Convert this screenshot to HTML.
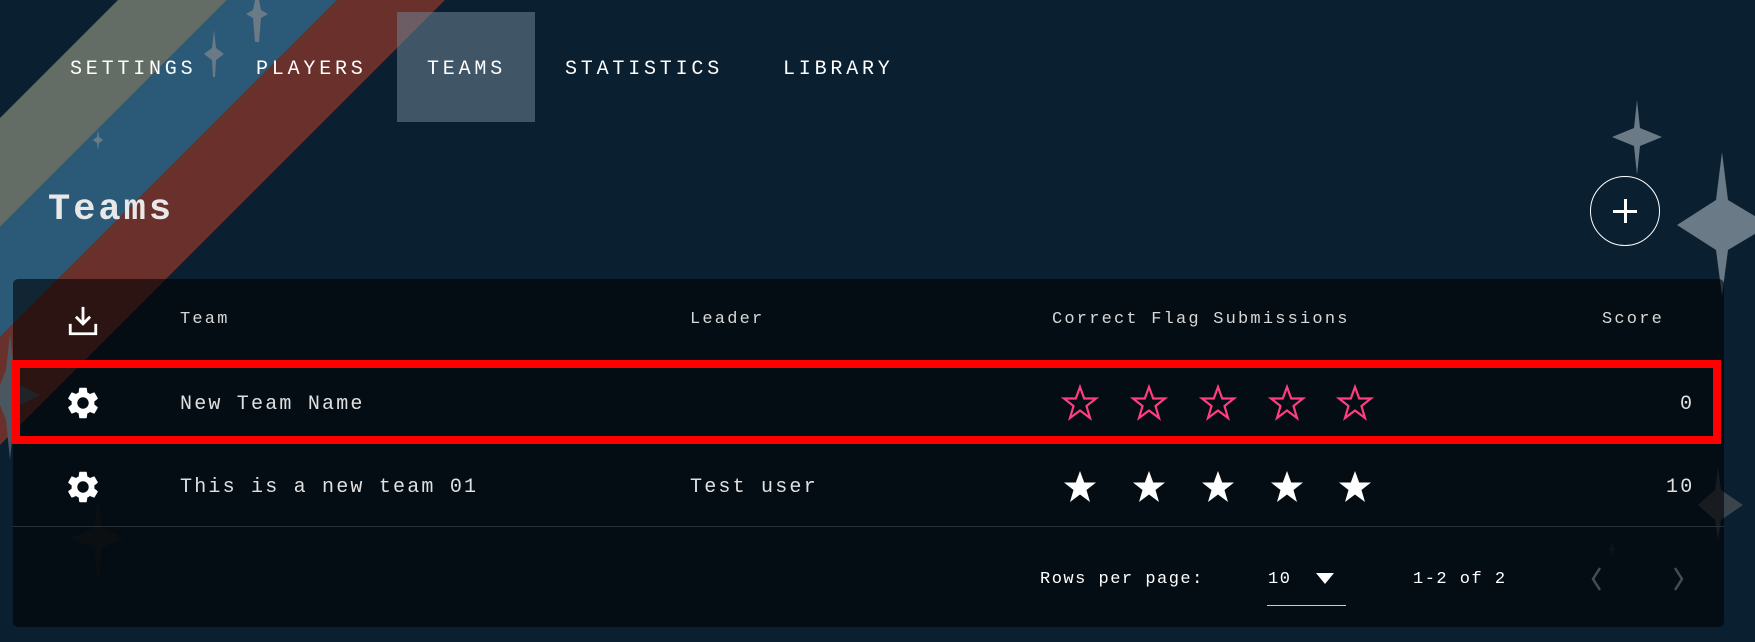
<!DOCTYPE html>
<html><head><meta charset="utf-8"><style>
*{margin:0;padding:0;box-sizing:border-box}
body{width:1755px;height:642px;background:#0a1f2f;overflow:hidden;position:relative;font-family:"Liberation Mono",monospace;color:#e6e6e6}
.band{position:absolute;left:0;top:0;width:1755px;height:642px}
.nav{position:absolute;top:15px;height:110px;font-size:20px;letter-spacing:3.8px;color:#fff;line-height:110px}
.nav span{position:absolute;white-space:nowrap}
.active{position:absolute;left:397px;top:12px;width:138px;height:110px;background:rgba(110,130,145,.55)}
h1{position:absolute;left:48px;top:189px;font-size:37px;letter-spacing:3px;font-weight:bold;color:#e8e8e8}
.plus{position:absolute;left:1590px;top:176px;width:70px;height:70px;border:1.5px solid #fff;border-radius:50%}
.plus:before{content:"";position:absolute;left:22px;top:33px;width:24px;height:3px;background:#fff}
.plus:after{content:"";position:absolute;left:33px;top:22px;width:3px;height:24px;background:#fff}
.card{position:absolute;left:13px;top:279px;width:1711px;height:348px;background:rgba(0,0,0,.58);border-radius:5px}
.t{position:absolute;white-space:nowrap}
.hd{font-size:17px;letter-spacing:2.2px;color:#d8d8d8;top:310px}
.rw{font-size:20px;letter-spacing:2.2px;color:#e0e0e0}
.red{position:absolute;left:12px;top:360px;width:1709px;height:84px;border:8px solid #ff0000}
.line{position:absolute;left:13px;top:526px;width:1711px;height:1px;background:#2a3036}
.pg{font-size:17px;letter-spacing:1.5px;color:#fff;top:570px}
</style></head><body>
<svg class="band" viewBox="0 0 1755 642">
<polygon points="118,0 227,0 -415,642 -524,642" fill="#646c66"/>
<polygon points="227,0 337,0 -305,642 -415,642" fill="#2b5a78"/>
<polygon points="337,0 445,0 -197,642 -305,642" fill="#6a302b"/>
<g fill="#6a7a86">
<polygon points="255,0 259,0 261,10 268,14 261,18 259,42 255,42 253,18 246,14 253,10"/>
<polygon points="214,30 216,48 224,54 216,60 215,77 213,77 212,60 204,54 212,48"/>
<polygon points="98,130 99,137 103,140 99,143 98,150 97,143 93,140 97,137"/>
<polygon points="1637,100 1640,128 1662,137 1640,146 1637,175 1634,146 1612,137 1634,128"/>
<polygon points="1722,152 1728,200 1770,225 1728,250 1722,296 1716,250 1677,225 1716,200"/>
<polygon points="10,333 14,370 20,385 40,395 20,405 14,420 10,460 6,420 0,405 0,385 6,370" fill="#4a5660"/>
<polygon points="98,497 102,528 124,538 102,548 98,580 94,548 70,538 94,528" fill="#1e252c"/>
<polygon points="1718,467 1721,490 1743,505 1721,520 1718,540 1715,520 1698,505 1715,490" fill="#3a444c"/>
<polygon points="1612,540 1613,547 1616,549 1613,551 1612,558 1611,551 1608,549 1611,547" fill="#2a3038"/>
</g>
</svg>
<div class="active"></div>
<div class="nav"><span style="left:70px">SETTINGS</span><span style="left:256px">PLAYERS</span><span style="left:427px">TEAMS</span><span style="left:565px">STATISTICS</span><span style="left:783px">LIBRARY</span></div>
<h1>Teams</h1>
<div class="plus"></div>
<div class="card"></div>
<svg style="position:absolute;left:66px;top:304px" width="34" height="34" viewBox="0 0 24 24" fill="none" stroke="#fff" stroke-width="2"><path d="M12 2v12M7 9l5 5 5-5M3 14v7h18v-7"/></svg>
<div class="t hd" style="left:180px">Team</div>
<div class="t hd" style="left:690px">Leader</div>
<div class="t hd" style="left:1052px">Correct Flag Submissions</div>
<div class="t hd" style="left:1602px">Score</div>
<div class="red"></div>
<svg style="position:absolute;left:64px;top:384px" width="38" height="38" viewBox="0 0 24 24"><path id="g" fill="#fff" d="M19.14 12.94c.04-.3.06-.61.06-.94 0-.32-.02-.64-.07-.94l2.030-1.58a.49.49 0 0 0 .12-.61l-1.92-3.32a.49.49 0 0 0-.59-.22l-2.39.96c-.5-.38-1.03-.7-1.62-.94l-.36-2.54a.48.48 0 0 0-.48-.41h-3.84c-.24 0-.43.17-.47.41l-.36 2.54c-.59.24-1.13.57-1.620.94l-2.39-.96a.49.49 0 0 0-.59.22L2.74 8.87c-.12.21-.08.47.12.61l2.03 1.58c-.05.3-.09.63-.09.94s.02.64.07.94l-2.03 1.58a.49.49 0 0 0-.12.61l1.92 3.32c.12.22.37.29.59.22l2.39-.96c.5.38 1.03.7 1.62.94l.36 2.54c.05.24.24.41.48.41h3.84c.24 0 .44-.17.47-.41l.36-2.54c.59-.24 1.13-.56 1.62-.94l2.39.96c.22.08.47 0 .59-.22l1.92-3.32c.12-.22.07-.47-.12-.61l-2.01-1.58zM12 15.6A3.6 3.6 0 1 1 12 8.4a3.6 3.6 0 0 1 0 7.2z"/></svg>
<div class="t rw" style="left:180px;top:393px">New Team Name</div>
<div class="t rw" style="left:1680px;top:393px">0</div>
<svg style="position:absolute;left:64px;top:468px" width="38" height="38" viewBox="0 0 24 24"><use href="#g"/></svg>
<div class="t rw" style="left:180px;top:476px">This is a new team 01</div>
<div class="t rw" style="left:690px;top:476px">Test user</div>
<div class="t rw" style="left:1666px;top:476px">10</div>
<svg style="position:absolute;left:1060px;top:383px" width="320" height="40" viewBox="0 0 320 40">
<defs><polygon id="s" points="20,4 24.2,15.5 36,15.5 26.5,23 30,35 20,27.5 10,35 13.5,23 4,15.5 15.8,15.5"/></defs>
<g fill="none" stroke="#ff3d7f" stroke-width="2.2"><use href="#s" x="0"/><use href="#s" x="69"/><use href="#s" x="138"/><use href="#s" x="207"/><use href="#s" x="275"/></g>
</svg>
<svg style="position:absolute;left:1060px;top:467px" width="320" height="40" viewBox="0 0 320 40">
<g fill="#fff"><use href="#s" x="0"/><use href="#s" x="69"/><use href="#s" x="138"/><use href="#s" x="207"/><use href="#s" x="275"/></g>
</svg>
<div class="line"></div>
<div class="t pg" style="left:1040px">Rows per page:</div>
<div class="t pg" style="left:1268px">10</div>
<svg style="position:absolute;left:1316px;top:573px" width="18" height="12"><polygon points="0,0 18,0 9,11" fill="#fff"/></svg>
<div style="position:absolute;left:1267px;top:605px;width:79px;height:1px;background:#ccc"></div>
<div class="t pg" style="left:1413px">1-2 of 2</div>
<svg style="position:absolute;left:1586px;top:564px" width="110" height="30" fill="none" stroke="#444c54" stroke-width="2.5"><path d="M14 4 7 15l7 11"/><path d="M89 4l7 11-7 11"/></svg>
</body></html>
